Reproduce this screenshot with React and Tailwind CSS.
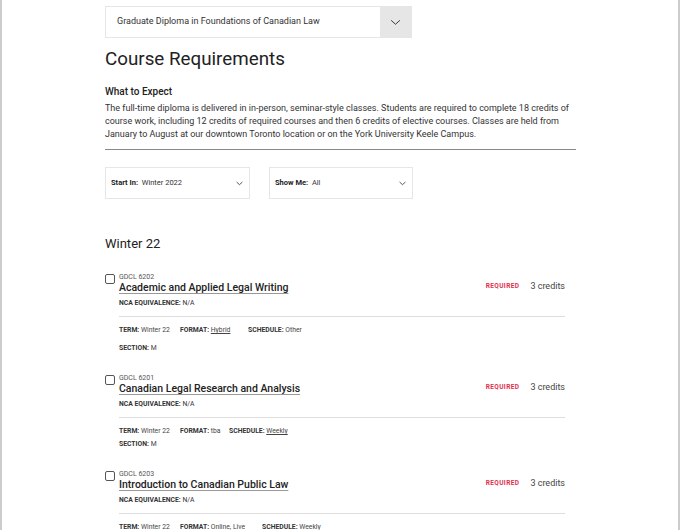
import React from "react";

const Chevron = ({ className = "", sw = "1.4" }) => (
  <svg viewBox="0 0 12 8" className={className} fill="none" stroke="currentColor" strokeWidth={sw}>
    <path d="M1 1.5 L6 6 L11 1.5" />
  </svg>
);

const courses = [
  { code: "GDCL 6202", title: "Academic and Applied Legal Writing", format: "Hybrid", formatU: true, schedule: "Other", scheduleU: false, gap: "gap-[9px]", fw: "w-[68px]" },
  { code: "GDCL 6201", title: "Canadian Legal Research and Analysis", format: "tba", formatU: false, schedule: "Weekly", scheduleU: true, gap: "gap-[4px]", fw: "w-[49px]" },
  { code: "GDCL 6203", title: "Introduction to Canadian Public Law", format: "Online, Live", formatU: false, schedule: "Weekly", scheduleU: false, gap: "gap-[4px]", fw: "w-[82px]" },
];

function Course({ c }) {
  return (
    <div className="flex gap-[4px]">
      <div className="w-[10px] h-[10px] mt-[1px] border border-[#555] rounded-[2px] shrink-0" />
      <div className="flex-1">
        <div className="text-[7px] leading-[9px] text-[#555]">{c.code}</div>
        <div className="flex items-start justify-between mt-[-1px]">
          <div className="text-[10.5px] leading-[14px] font-medium text-[#222] underline decoration-[#999] underline-offset-2">{c.title}</div>
          <div className="flex items-center gap-[11px] mt-[-1px]">
            <span className="text-[6.5px] font-bold text-[#e0304b] tracking-[0.4px]">REQUIRED</span>
            <span className="text-[9px] text-[#444]">3 credits</span>
          </div>
        </div>
        <div className="text-[6.8px] leading-[9px] mt-[4px] text-[#333]"><b>NCA EQUIVALENCE:</b> N/A</div>
        <div className="h-px bg-[#ddd] mt-[8px]" />
        <div className={`flex flex-col ${c.gap} mt-[9px] text-[6.8px] leading-[9px] text-[#444]`}>
          <div className="flex">
            <span className="w-[61px]"><b className="text-[#333]">TERM:</b> Winter 22</span>
            <span className={c.fw}><b className="text-[#333]">FORMAT:</b> <span className={c.formatU ? "underline" : ""}>{c.format}</span></span>
            <span><b className="text-[#333]">SCHEDULE:</b> <span className={c.scheduleU ? "underline" : ""}>{c.schedule}</span></span>
          </div>
          <div><b className="text-[#333]">SECTION:</b> M</div>
        </div>
      </div>
    </div>
  );
}

export default function App() {
  return (
    <div className="w-[680px] h-[530px] overflow-hidden bg-white border-x-2 border-[#ccc] text-[#333]" style={{ fontFamily: 'Roboto, "Noto Sans", sans-serif' }}>
      <div className="pl-[103px] pr-[102px] pt-[6px]">
        <div className="w-[307px] h-[32px] flex border border-[#e6e6e6]">
          <div className="flex-1 flex items-center pl-[11px] text-[9px] text-[#333]">Graduate Diploma in Foundations of Canadian Law</div>
          <div className="w-[31px] bg-[#e6e6e6] flex items-center justify-center text-[#333]">
            <Chevron className="w-[13px] h-[7px]" sw="1.1" />
          </div>
        </div>
        <h1 className="text-[18.8px] leading-[26px] mt-[8px] text-[#222]">Course Requirements</h1>
        <h2 className="text-[10px] font-medium mt-[13px] leading-[14px] text-[#222]">What to Expect</h2>
        <p className="text-[9px] leading-[13px] mt-[3px] text-[#333] w-[472px]">
          The full-time diploma is delivered in in-person, seminar-style classes. Students are required to complete 18 credits of course work, including 12 credits of required courses and then 6 credits of elective courses. Classes are held from January to August at our downtown Toronto location or on the York University Keele Campus.
        </p>
        <div className="h-px bg-[#888] w-[471px] mt-[8px]" />
        <div className="flex gap-[19px] mt-[17px]">
          <div className="w-[145px] h-[32px] border border-[#e6e6e6] flex items-center justify-between pl-[5px] pr-[6px] text-[7.5px]">
            <span><b className="text-[#222]">Start In:</b>&nbsp; Winter 2022</span>
            <Chevron className="w-[7px] h-[5px]" />
          </div>
          <div className="w-[144px] h-[32px] border border-[#e6e6e6] flex items-center justify-between pl-[5px] pr-[6px] text-[7.5px]">
            <span><b className="text-[#222]">Show Me:</b>&nbsp; All</span>
            <Chevron className="w-[7px] h-[5px]" />
          </div>
        </div>
        <h3 className="text-[13px] leading-[18px] mt-[36px] text-[#222]">Winter 22</h3>
        <div className="flex flex-col gap-[21px] mt-[20px] w-[460px]">
          {courses.map((c) => (
            <Course key={c.code} c={c} />
          ))}
        </div>
      </div>
    </div>
  );
}
